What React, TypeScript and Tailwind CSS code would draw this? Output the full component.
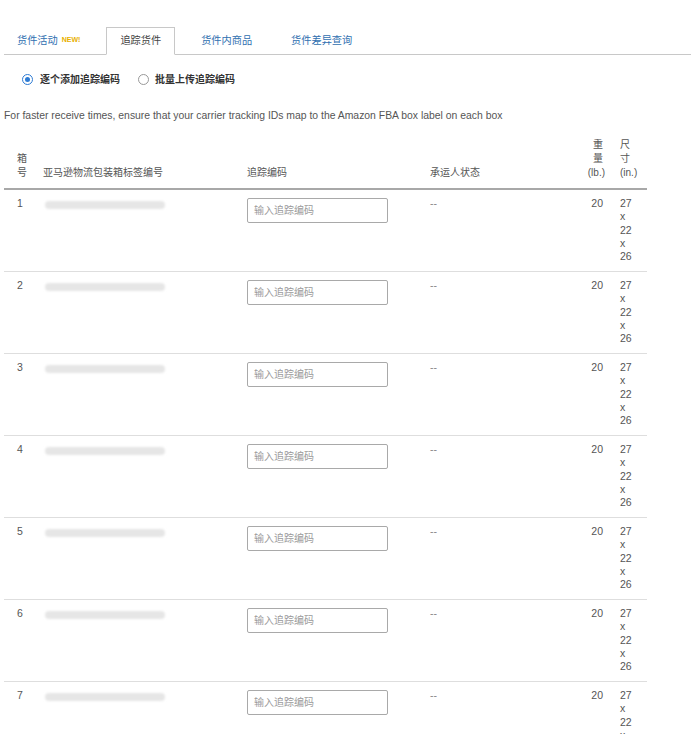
import React from 'react';

const font = { fontFamily: '"Liberation Sans", "Noto Sans CJK SC", sans-serif' };

const tabs = [
  { label: '货件活动', isNew: true },
  { label: '追踪货件', active: true },
  { label: '货件内商品' },
  { label: '货件差异查询' },
];

const rows = [1, 2, 3, 4, 5, 6, 7];

const Row: React.FC<{ n: number }> = ({ n }) => (
  <div className="grid grid-cols-[39px_204px_183px_143px_47px_27px] h-[82px] border-b border-[#dedede] text-[10.5px] text-[#555] pt-[7px]">
    <div className="pl-[13px] leading-[13px]">{n}</div>
    <div className="pt-[4px] pl-[2px]">
      <div className="w-[120px] h-[8px] rounded-sm bg-[#e6e6e6] blur-[1px]" />
    </div>
    <div>
      <div className="w-[141px] h-[25px] mt-[1px] border border-[#a9a9a9] rounded-[2px] flex items-center pl-[6px] text-[10px] text-[#9a9a9a]">
        输入追踪编码
      </div>
    </div>
    <div className="leading-[13px] text-[#888]">--</div>
    <div className="text-right pr-[17px] leading-[13px]">20</div>
    <div className="leading-[13.3px]">
      <div>27</div>
      <div>x</div>
      <div>22</div>
      <div>x</div>
      <div>26</div>
    </div>
  </div>
);

export default function App() {
  return (
    <div className="w-[691px] h-[734px] overflow-hidden bg-white" style={font}>
      <div className="pt-[27px] pl-[4px]">
        <div className="flex gap-[13px] border-b border-[#c8c8c8] h-[28px]">
          {tabs.map((t) => (
            <div
              key={t.label}
              className={
                t.active
                  ? 'px-[13px] h-[28px] flex items-center border border-b-white border-[#c8c8c8] bg-white text-[#444] text-[10.2px] -mb-px'
                  : 'px-[13px] h-[27px] flex items-center text-[#2f6fb0] text-[10.2px]'
              }
            >
              {t.label}
              {t.isNew && <span className="ml-[4px] text-[7px] font-bold text-[#e8b000]">NEW!</span>}
            </div>
          ))}
        </div>
      </div>

      <div className="flex items-center h-[20px] mt-[14px] pl-[22px] text-[10px] text-[#333] font-bold">
        <div className="w-[11px] h-[11px] rounded-full border-[1.5px] border-[#2d7bd4] flex items-center justify-center">
          <div className="w-[5px] h-[5px] rounded-full bg-[#2d7bd4]" />
        </div>
        <span className="ml-[7px]">逐个添加追踪编码</span>
        <div className="ml-[18px] w-[11px] h-[11px] rounded-full border border-[#999] bg-white" />
        <span className="ml-[6px]">批量上传追踪编码</span>
      </div>

      <div className="mt-[20px] pl-[4px] text-[10.4px] text-[#555] leading-[14px]">
        For faster receive times, ensure that your carrier tracking IDs map to the Amazon FBA box label on each box
      </div>

      <div className="ml-[4px] w-[643px] mt-[15px]">
        <div className="grid grid-cols-[39px_204px_183px_143px_47px_27px] items-end border-b-2 border-[#a8a8a8] pb-[8px] text-[10px] text-[#555] leading-[14px]">
          <div className="pl-[13px]">
            <div>箱</div>
            <div>号</div>
          </div>
          <div>亚马逊物流包装箱标签编号</div>
          <div>追踪编码</div>
          <div>承运人状态</div>
          <div className="text-right pr-[17px]">
            <div>重</div>
            <div>量</div>
            <div className="-mr-[2px]">(lb.)</div>
          </div>
          <div>
            <div>尺</div>
            <div>寸</div>
            <div>(in.)</div>
          </div>
        </div>
        {rows.map((n) => (
          <Row key={n} n={n} />
        ))}
      </div>
    </div>
  );
}
